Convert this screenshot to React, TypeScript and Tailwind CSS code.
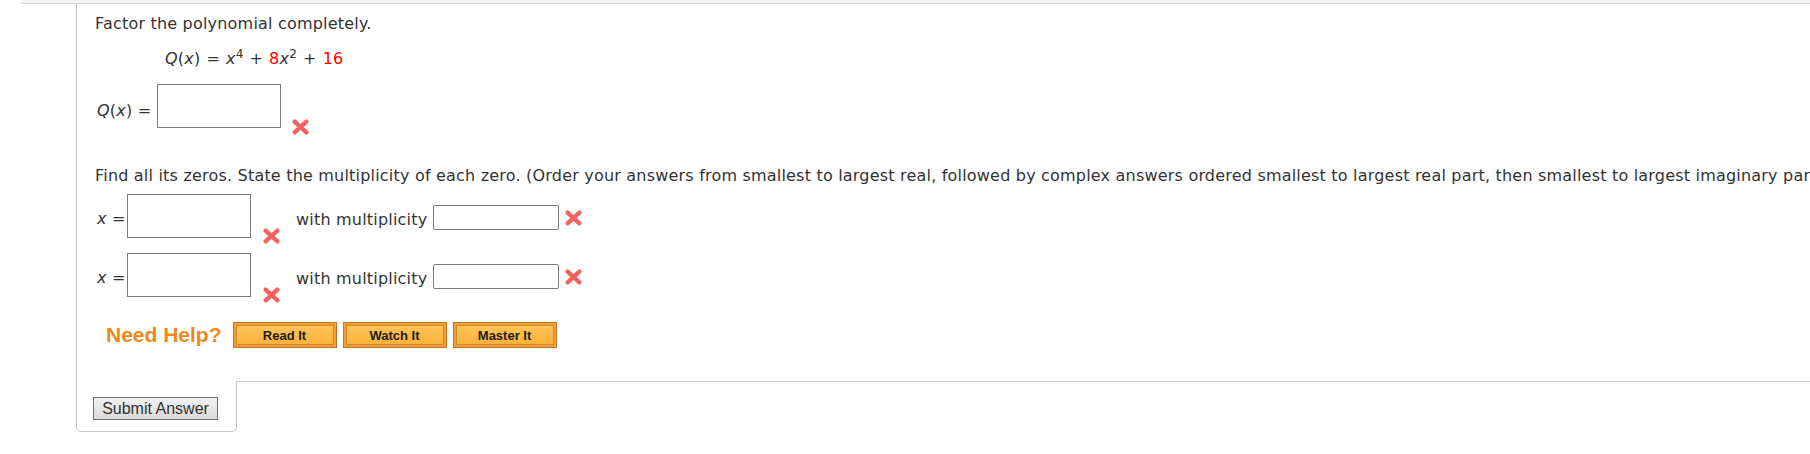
import React from "react";

function WrongMark({ className = "" }: { className?: string }) {
  return (
    <svg width="17" height="16" viewBox="0 0 17 16" className={`shrink-0 ${className}`}>
      <path
        d="M2.6 2.6 L14.4 13.4 M14.4 2.6 L2.6 13.4"
        stroke="#f4625f"
        strokeWidth="4.2"
        strokeLinecap="round"
        fill="none"
      />
    </svg>
  );
}

function HelpButton({ label }: { label: string }) {
  return (
    <button className="flex h-[26px] w-[104px] items-center justify-center border border-[#c0752a] bg-[#f59d2e] p-[2px]">
      <span className="flex h-full w-full items-center justify-center border border-[#c98a3c] bg-linear-to-b from-[#ffc556] to-[#fbb13c] font-['Liberation_Sans',Arial,sans-serif] text-[13px] font-bold leading-none tracking-normal text-[#1c1c1c]">
        {label}
      </span>
    </button>
  );
}

function ZeroRow() {
  return (
    <div className="flex h-[59px] items-start">
      <span className="mt-[15px] w-[32px] whitespace-nowrap pl-[2px]">
        <i>x</i> =
      </span>
      <input readOnly className="h-[44px] w-[124px] border border-[#7a7a7a] bg-white outline-none" />
      <WrongMark className="ml-[12px] mt-[34px]" />
      <span className="ml-[16px] mt-[16px] whitespace-nowrap">with multiplicity</span>
      <input
        readOnly
        className="ml-[6px] mt-[11px] h-[25px] w-[126px] rounded-[2px] border border-[#7a7a7a] bg-white outline-none"
      />
      <WrongMark className="ml-[6px] mt-[16px]" />
    </div>
  );
}

export default function App() {
  return (
    <div className="h-[454px] w-full overflow-hidden bg-white font-['DejaVu_Sans',Verdana,sans-serif] text-[16px] leading-[20px] tracking-[0.2px] text-[#333]">
      {/* end of previous question */}
      <div className="ml-[20px] h-[4px] rounded-bl-[3px] border-b border-[#d4d4d4] bg-[#f4f4f4]" />

      <div className="ml-[76px] border-b border-l border-[#c8c8c8] pb-[33px] pl-[18px] pt-[10px]">
        <p className="whitespace-nowrap">Factor the polynomial completely.</p>

        <p className="mt-[15px] whitespace-nowrap pl-[70px]">
          <i>Q</i>(<i>x</i>)<span className="mx-[6px]">=</span>
          <i>x</i>
          <sup>4</sup>
          <span className="mx-[6px]">+</span>
          <span className="text-[#f00]">8</span>
          <i>x</i>
          <sup>2</sup>
          <span className="mx-[6px]">+</span>
          <span className="text-[#f00]">16</span>
        </p>

        <div className="mt-[15px] flex items-start">
          <span className="mt-[17px] w-[62px] whitespace-nowrap pl-[2px]">
            <i>Q</i>(<i>x</i>) =
          </span>
          <input readOnly className="h-[44px] w-[124px] border border-[#7a7a7a] bg-white outline-none" />
          <WrongMark className="ml-[11px] mt-[35px]" />
        </div>

        <p className="mt-[31px] whitespace-nowrap">
          Find all its zeros. State the multiplicity of each zero. (Order your answers from smallest to largest real,
          followed by complex answers ordered smallest to largest real part, then smallest to largest imaginary part.)
        </p>

        <div className="mt-[8px]">
          <ZeroRow />
          <ZeroRow />
        </div>

        <div className="mt-[10px] flex items-start pl-[11px]">
          <span className="font-['Liberation_Sans',Arial,sans-serif] text-[21px] font-bold leading-[26px] tracking-normal text-[#ee8a1c]">
            Need Help?
          </span>
          <div className="ml-[11px] flex gap-[6px]">
            <HelpButton label="Read It" />
            <HelpButton label="Watch It" />
            <HelpButton label="Master It" />
          </div>
        </div>
      </div>

      <div className="relative -mt-px ml-[76px] w-[161px] rounded-b-[5px] border-x border-b border-[#c8c8c8] bg-white pb-[11px] pl-[16px] pt-[16px]">
        <button className="h-[23px] w-[125px] border border-[#707070] bg-linear-to-b from-[#f2f2f2] to-[#dadada] font-['Liberation_Sans',Arial,sans-serif] text-[16px] leading-none tracking-normal text-[#333]">
          Submit Answer
        </button>
      </div>
    </div>
  );
}
